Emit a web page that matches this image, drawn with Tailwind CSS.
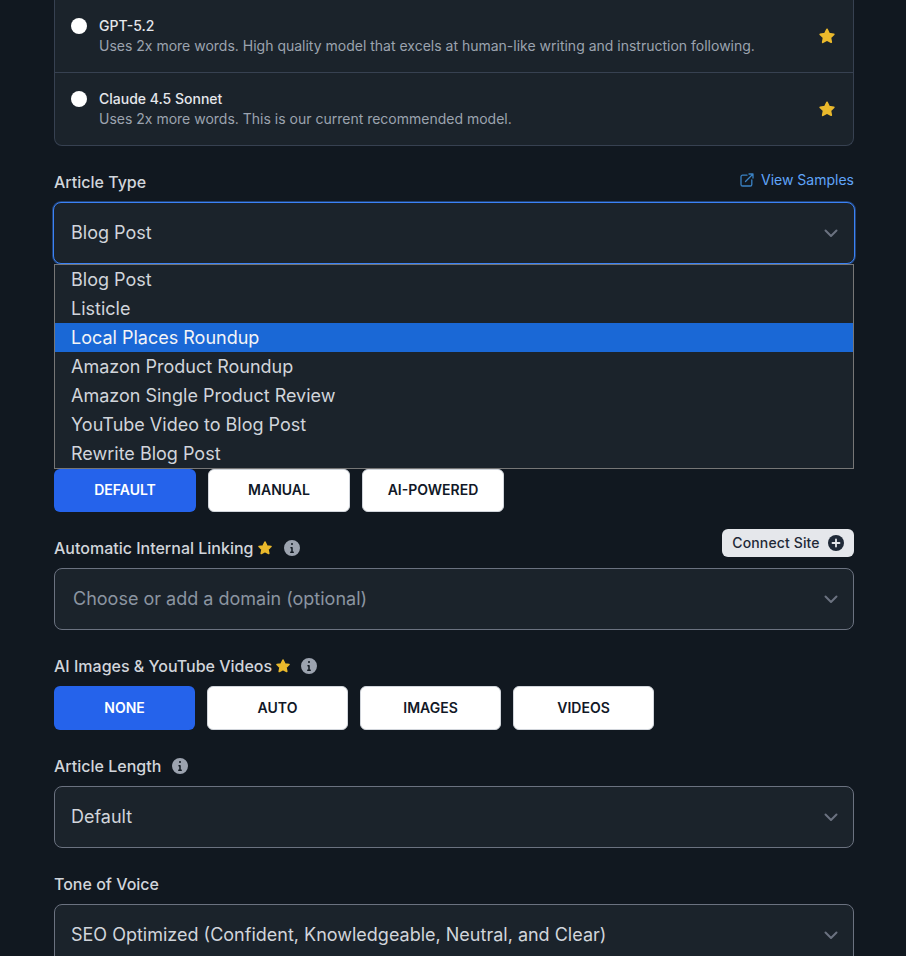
<!DOCTYPE html>
<html lang="en">
<head>
    <meta charset="UTF-8" />
    <meta name="viewport" content="width=device-width, initial-scale=1.0" />
    <title>Create Article</title>
    <script src="https://cdn.jsdelivr.net/npm/@tailwindcss/browser@4"></script>
</head>
<body class="bg-[#111820] h-screen overflow-hidden antialiased font-['Inter',sans-serif] text-[#d1d5db]">
    <svg class="hidden">
        <symbol id="star" viewBox="0 0 20 20">
            <path fill="#eab92c" stroke="#eab92c" stroke-width="2" stroke-linejoin="round" d="M10 2.6l2.3 4.8 5.2.7-3.8 3.6 1 5.2L10 14.4l-4.7 2.5 1-5.2-3.8-3.6 5.2-.7z" />
        </symbol>
        <symbol id="info" viewBox="0 0 20 20">
            <path fill="#9ca3af" fill-rule="evenodd" d="M18 10a8 8 0 1 1-16 0 8 8 0 0 1 16 0zM11 6a1 1 0 1 1-2 0 1 1 0 0 1 2 0zM9 9a.75.75 0 0 0 0 1.5h.25v3H8.75a.75.75 0 0 0 0 1.5h2.5a.75.75 0 0 0 0-1.5h-.5V9.75A.75.75 0 0 0 10 9z" clip-rule="evenodd" />
        </symbol>
        <symbol id="chevron" viewBox="0 0 20 20">
            <path fill="none" stroke="#6b7280" stroke-width="2" stroke-linecap="round" stroke-linejoin="round" d="M4.5 7.5L10 13l5.5-5.5" />
        </symbol>
    </svg>

    <main class="pl-[54px] pr-[52px]">
        <!-- model list -->
        <div class="bg-[#1b232b] border border-[#374151] border-t-0 rounded-b-lg">
            <div class="h-[73px] flex items-center pl-4 pr-[17px] border-b border-[#374151]">
                <span class="w-4 h-4 rounded-full bg-white shrink-0 -mt-[21px]"></span>
                <div class="ml-3 flex-1 -mt-[1px]">
                    <p class="text-sm leading-5 font-medium text-[#e5e7eb]">GPT-5.2</p>
                    <p class="text-sm leading-5 text-[#9ca3af]">Uses 2x more words. High quality model that excels at human-like writing and instruction following.</p>
                </div>
                <svg class="w-[18px] h-[18px]"><use href="#star" /></svg>
            </div>
            <div class="h-[72px] flex items-center pl-4 pr-[17px]">
                <span class="w-4 h-4 rounded-full bg-white shrink-0 -mt-[21px]"></span>
                <div class="ml-3 flex-1 -mt-[1px]">
                    <p class="text-sm leading-5 font-medium text-[#e5e7eb]">Claude 4.5 Sonnet</p>
                    <p class="text-sm leading-5 text-[#9ca3af]">Uses 2x more words. This is our current recommended model.</p>
                </div>
                <svg class="w-[18px] h-[18px]"><use href="#star" /></svg>
            </div>
        </div>

        <!-- article type -->
        <div class="mt-6 flex items-start justify-between h-[32px]">
            <label class="text-base leading-6 font-medium text-[#d1d5db]">Article Type</label>
            <a class="flex items-center gap-1.5 text-sm leading-5 text-[#60a5fa]">
                <svg class="w-4 h-4" viewBox="0 0 16 16" fill="none" stroke="#3b82c4" stroke-width="1.3" stroke-linecap="round" stroke-linejoin="round">
                    <path d="M8 3.2H3.6c-.9 0-1.6.7-1.6 1.6v7.6c0 .9.7 1.6 1.6 1.6h7.6c.9 0 1.6-.7 1.6-1.6V8" />
                    <path d="M6.5 9.5L14 2M10 2h4v4" />
                </svg>
                View Samples
            </a>
        </div>
        <div class="relative">
            <div class="h-[62px] bg-[#1b232b] border border-[#3b82f6] ring-1 ring-[#3b82f6]/40 rounded-lg -mx-px px-[17px] flex items-center justify-between text-lg">
                Blog Post
                <svg class="w-5 h-5 -mr-[4px]"><use href="#chevron" /></svg>
            </div>
            <!-- open dropdown -->
            <ul class="absolute z-10 top-[62px] left-0 right-0 bg-[#1b232b] border border-[#767676] text-lg leading-[29px] h-[205px]">
                <li class="px-4">Blog Post</li>
                <li class="px-4">Listicle</li>
                <li class="px-4 bg-[#1a68d6] text-[#f3f4f6]">Local Places Roundup</li>
                <li class="px-4">Amazon Product Roundup</li>
                <li class="px-4">Amazon Single Product Review</li>
                <li class="px-4">YouTube Video to Blog Post</li>
                <li class="px-4">Rewrite Blog Post</li>
            </ul>
        </div>

        <div class="mt-[205px] flex gap-3">
            <button class="w-[142px] h-[43px] pb-px rounded-md bg-[#2563eb] text-white text-sm font-semibold">DEFAULT</button>
            <button class="w-[142px] h-[43px] pb-px rounded-md bg-white border border-[#d1d5db] text-[#111827] text-sm font-semibold">MANUAL</button>
            <button class="w-[142px] h-[43px] pb-px rounded-md bg-white border border-[#d1d5db] text-[#111827] text-sm font-semibold">AI-POWERED</button>
        </div>

        <!-- internal linking -->
        <div class="mt-[17px] h-[39px] flex items-start justify-between">
            <div class="flex items-center mt-[7px]">
                <label class="text-base leading-6 font-medium text-[#d1d5db]">Automatic Internal Linking</label>
                <svg class="w-4 h-4 ml-1"><use href="#star" /></svg>
                <svg class="w-5 h-5 ml-[9px]"><use href="#info" /></svg>
            </div>
            <button class="w-[132px] h-[28px] rounded-md bg-[#e5e7eb] text-[#1f2937] text-sm font-medium tracking-[0.01em] flex items-center justify-center gap-2">
                Connect Site
                <svg class="w-4 h-4" viewBox="0 0 16 16">
                    <circle cx="8" cy="8" r="8" fill="#1f2937" />
                    <path d="M8 4.5v7M4.5 8h7" stroke="#e5e7eb" stroke-width="1.8" stroke-linecap="round" />
                </svg>
            </button>
        </div>
        <div class="h-[62px] bg-[#1b232b] border border-[#6b7280] rounded-lg px-[18px] flex items-center justify-between text-lg text-[#8b95a1]">
            Choose or add a domain (optional)
            <svg class="w-5 h-5 -mr-[6px]"><use href="#chevron" /></svg>
        </div>

        <!-- images and videos -->
        <div class="mt-6 h-[32px] flex items-start">
            <label class="text-base leading-6 font-medium text-[#d1d5db]">AI Images &amp; YouTube Videos</label>
            <svg class="w-4 h-4 ml-[3px] mt-1"><use href="#star" /></svg>
            <svg class="w-5 h-5 ml-2 mt-[2px]"><use href="#info" /></svg>
        </div>
        <div class="flex gap-3">
            <button class="w-[141px] h-[44px] rounded-md bg-[#2563eb] text-white text-sm font-semibold">NONE</button>
            <button class="w-[141px] h-[44px] rounded-md bg-white border border-[#d1d5db] text-[#111827] text-sm font-semibold">AUTO</button>
            <button class="w-[141px] h-[44px] rounded-md bg-white border border-[#d1d5db] text-[#111827] text-sm font-semibold">IMAGES</button>
            <button class="w-[141px] h-[44px] rounded-md bg-white border border-[#d1d5db] text-[#111827] text-sm font-semibold">VIDEOS</button>
        </div>

        <!-- article length -->
        <div class="mt-6 h-[32px] flex items-start">
            <label class="text-base leading-6 font-medium text-[#d1d5db]">Article Length</label>
            <svg class="w-5 h-5 ml-[9px] mt-[2px]"><use href="#info" /></svg>
        </div>
        <div class="h-[62px] bg-[#1b232b] border border-[#6b7280] rounded-lg px-4 flex items-center justify-between text-lg">
            Default
            <svg class="w-5 h-5 -mr-[4px]"><use href="#chevron" /></svg>
        </div>

        <!-- tone -->
        <div class="mt-6 h-[32px]">
            <label class="text-base leading-6 font-medium text-[#d1d5db]">Tone of Voice</label>
        </div>
        <div class="h-[62px] bg-[#1b232b] border border-[#6b7280] rounded-lg px-4 flex items-center justify-between text-lg">
            SEO Optimized (Confident, Knowledgeable, Neutral, and Clear)
            <svg class="w-5 h-5 -mr-[4px]"><use href="#chevron" /></svg>
        </div>
    </main>
</body>
</html>
